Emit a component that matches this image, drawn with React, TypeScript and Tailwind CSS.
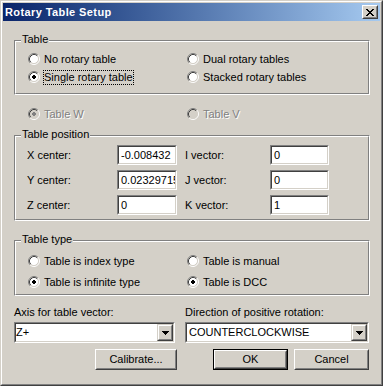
import React from "react";

function Radio({ checked, disabled }: { checked?: boolean; disabled?: boolean }) {
  return (
    <svg width="12" height="12" viewBox="0 0 12 12" className="shrink-0 block">
      <circle cx="6" cy="6" r="4.5" fill={disabled ? "#D4D0C8" : "#FFFFFF"} />
      <path d="M2.11 9.89 A5.5 5.5 0 0 1 9.89 2.11" stroke="#808080" fill="none" />
      <path d="M9.89 2.11 A5.5 5.5 0 0 1 2.11 9.89" stroke="#FFFFFF" fill="none" />
      <path d="M2.82 9.18 A4.5 4.5 0 0 1 9.18 2.82" stroke="#404040" fill="none" />
      <path d="M9.18 2.82 A4.5 4.5 0 0 1 2.82 9.18" stroke="#D4D0C8" fill="none" />
      {checked && (
        <g fill={disabled ? "#808080" : "#000000"} shapeRendering="crispEdges">
          <rect x="4" y="5" width="4" height="2" />
          <rect x="5" y="4" width="2" height="4" />
        </g>
      )}
    </svg>
  );
}

function RadioRow({
  label,
  checked,
  disabled,
  focused,
}: {
  label: string;
  checked?: boolean;
  disabled?: boolean;
  focused?: boolean;
}) {
  return (
    <div className="h-[18px] flex items-center gap-[4px]">
      <Radio checked={checked} disabled={disabled} />
      <span
        className={
          disabled
            ? "text-[#808080] [text-shadow:1px_1px_0_#ffffff] whitespace-nowrap"
            : focused
            ? "outline-1 outline-dotted outline-black whitespace-nowrap"
            : "whitespace-nowrap"
        }
      >
        {label}
      </span>
    </div>
  );
}

function Group({
  label,
  className,
  innerClassName,
  children,
}: {
  label: string;
  className?: string;
  innerClassName?: string;
  children: React.ReactNode;
}) {
  return (
    <div
      className={`relative border border-t-[#808080] border-l-[#808080] border-b-white border-r-white ${className ?? ""}`}
    >
      <span className="absolute top-[-8px] left-[6px] px-[1px] bg-[#D4D0C8] whitespace-nowrap">{label}</span>
      <div
        className={`border border-t-white border-l-white border-b-[#808080] border-r-[#808080] ${innerClassName ?? ""}`}
      >
        {children}
      </div>
    </div>
  );
}

function Sunken({ className, children }: { className?: string; children: React.ReactNode }) {
  return (
    <div
      className={`border border-t-[#808080] border-l-[#808080] border-b-white border-r-white ${className ?? ""}`}
    >
      <div className="h-full border border-t-[#404040] border-l-[#404040] border-b-[#D4D0C8] border-r-[#D4D0C8] bg-white overflow-hidden">
        {children}
      </div>
    </div>
  );
}

function TextBox({ value, className }: { value: string; className?: string }) {
  return (
    <Sunken className={`h-[20px] ${className ?? ""}`}>
      <div className="h-full flex items-center pl-[2px] whitespace-nowrap overflow-hidden">{value}</div>
    </Sunken>
  );
}

function Raised({ className, children }: { className?: string; children: React.ReactNode }) {
  return (
    <div
      className={`border border-t-white border-l-white border-b-[#404040] border-r-[#404040] bg-[#D4D0C8] ${className ?? ""}`}
    >
      <div className="h-full border border-t-[#D4D0C8] border-l-[#D4D0C8] border-b-[#808080] border-r-[#808080] flex items-center justify-center">
        {children}
      </div>
    </div>
  );
}

function DropButton() {
  return (
    <div className="w-[16px] h-[17px] shrink-0 border border-t-[#D4D0C8] border-l-[#D4D0C8] border-b-[#404040] border-r-[#404040] bg-[#D4D0C8]">
      <div className="h-full border border-t-white border-l-white border-b-[#808080] border-r-[#808080] flex items-center justify-center">
        <svg width="7" height="4" viewBox="0 0 7 4" shapeRendering="crispEdges" className="block">
          <rect x="0" y="0" width="7" height="1" fill="#000" />
          <rect x="1" y="1" width="5" height="1" fill="#000" />
          <rect x="2" y="2" width="3" height="1" fill="#000" />
          <rect x="3" y="3" width="1" height="1" fill="#000" />
        </svg>
      </div>
    </div>
  );
}

function Combo({ value, textClass }: { value: string; textClass?: string }) {
  return (
    <Sunken className="h-[21px]">
      <div className="h-full flex items-center justify-between">
        <span className={`whitespace-nowrap ${textClass ?? ""}`}>{value}</span>
        <DropButton />
      </div>
    </Sunken>
  );
}

function CloseGlyph() {
  const rows = ["11000011", "01100110", "00111100", "00011000", "00111100", "01100110", "11000011"];
  return (
    <svg width="8" height="7" viewBox="0 0 8 7" shapeRendering="crispEdges" className="block">
      {rows.map((r, y) =>
        r.split("").map((c, x) => (c === "1" ? <rect key={`${x}-${y}`} x={x} y={y} width="1" height="1" fill="#000" /> : null))
      )}
    </svg>
  );
}

export default function App() {
  return (
    <div className="w-[383px] h-[386px] bg-[#D4D0C8] border border-t-[#D4D0C8] border-l-[#D4D0C8] border-b-[#404040] border-r-[#404040] font-['Liberation_Sans',Arial,sans-serif] text-[11px] leading-[13px] text-black">
      <div className="h-full border border-t-white border-l-white border-b-[#808080] border-r-[#808080] p-px flex flex-col">
        {/* Title bar */}
        <div className="h-[18px] flex items-center justify-between bg-linear-to-r from-[#0A246A] to-[#A6CAF0]">
          <span className="pl-[2px] font-bold text-white tracking-[0.4px] whitespace-nowrap">Rotary Table Setup</span>
          <Raised className="w-[16px] h-[14px] mr-[2px]">
            <CloseGlyph />
          </Raised>
        </div>

        {/* Body */}
        <div className="pl-[11px] pr-[10px] flex flex-col">
          <Group label="Table" className="mt-[19px]" innerClassName="pt-[8px] pb-[7px] pl-[12px] grid grid-cols-[159px_1fr]">
            <RadioRow label="No rotary table" />
            <RadioRow label="Dual rotary tables" />
            <RadioRow label="Single rotary table" checked focused />
            <RadioRow label="Stacked rotary tables" />
          </Group>

          <div className="mt-[10px] pl-[14px] grid grid-cols-[159px_1fr]">
            <RadioRow label="Table W" checked disabled />
            <RadioRow label="Table V" disabled />
          </div>

          <Group label="Table position" className="mt-[12px]" innerClassName="pt-[8px] pb-[4px] pl-[11px] flex flex-col gap-[5px]">
            <div className="h-[20px] flex items-center">
              <span className="w-[90px]">X center:</span>
              <TextBox value="-0.008432" className="w-[60px]" />
              <span className="w-[85px] ml-[8px]">I vector:</span>
              <TextBox value="0" className="w-[59px]" />
            </div>
            <div className="h-[20px] flex items-center">
              <span className="w-[90px]">Y center:</span>
              <TextBox value="0.023297156" className="w-[60px]" />
              <span className="w-[85px] ml-[8px]">J vector:</span>
              <TextBox value="0" className="w-[59px]" />
            </div>
            <div className="h-[20px] flex items-center">
              <span className="w-[90px]">Z center:</span>
              <TextBox value="0" className="w-[60px]" />
              <span className="w-[85px] ml-[8px]">K vector:</span>
              <TextBox value="1" className="w-[59px]" />
            </div>
          </Group>

          <Group label="Table type" className="mt-[19px]" innerClassName="pt-[10px] pb-[3px] pl-[12px] grid grid-cols-[159px_1fr] gap-y-[3px]">
            <RadioRow label="Table is index type" />
            <RadioRow label="Table is manual" />
            <RadioRow label="Table is infinite type" checked />
            <RadioRow label="Table is DCC" checked />
          </Group>

          <div className="mt-[10px] pr-[1px] grid grid-cols-[161px_1fr] gap-x-[10px]">
            <span className="whitespace-nowrap">Axis for table vector:</span>
            <span className="whitespace-nowrap">Direction of positive rotation:</span>
          </div>
          <div className="mt-[3px] pr-[1px] grid grid-cols-[161px_1fr] gap-x-[10px]">
            <Combo value="Z+" />
            <Combo value="COUNTERCLOCKWISE" textClass="pl-[2px]" />
          </div>

          <div className="mt-[6px] pr-[1px] flex justify-end">
            <Raised className="w-[82px] h-[21px]">
              <span>Calibrate...</span>
            </Raised>
            <div className="ml-[36px] w-[75px] h-[21px] border border-black">
              <Raised className="w-full h-full">
                <span>OK</span>
              </Raised>
            </div>
            <Raised className="ml-[6px] w-[75px] h-[21px]">
              <span>Cancel</span>
            </Raised>
          </div>
        </div>
      </div>
    </div>
  );
}
